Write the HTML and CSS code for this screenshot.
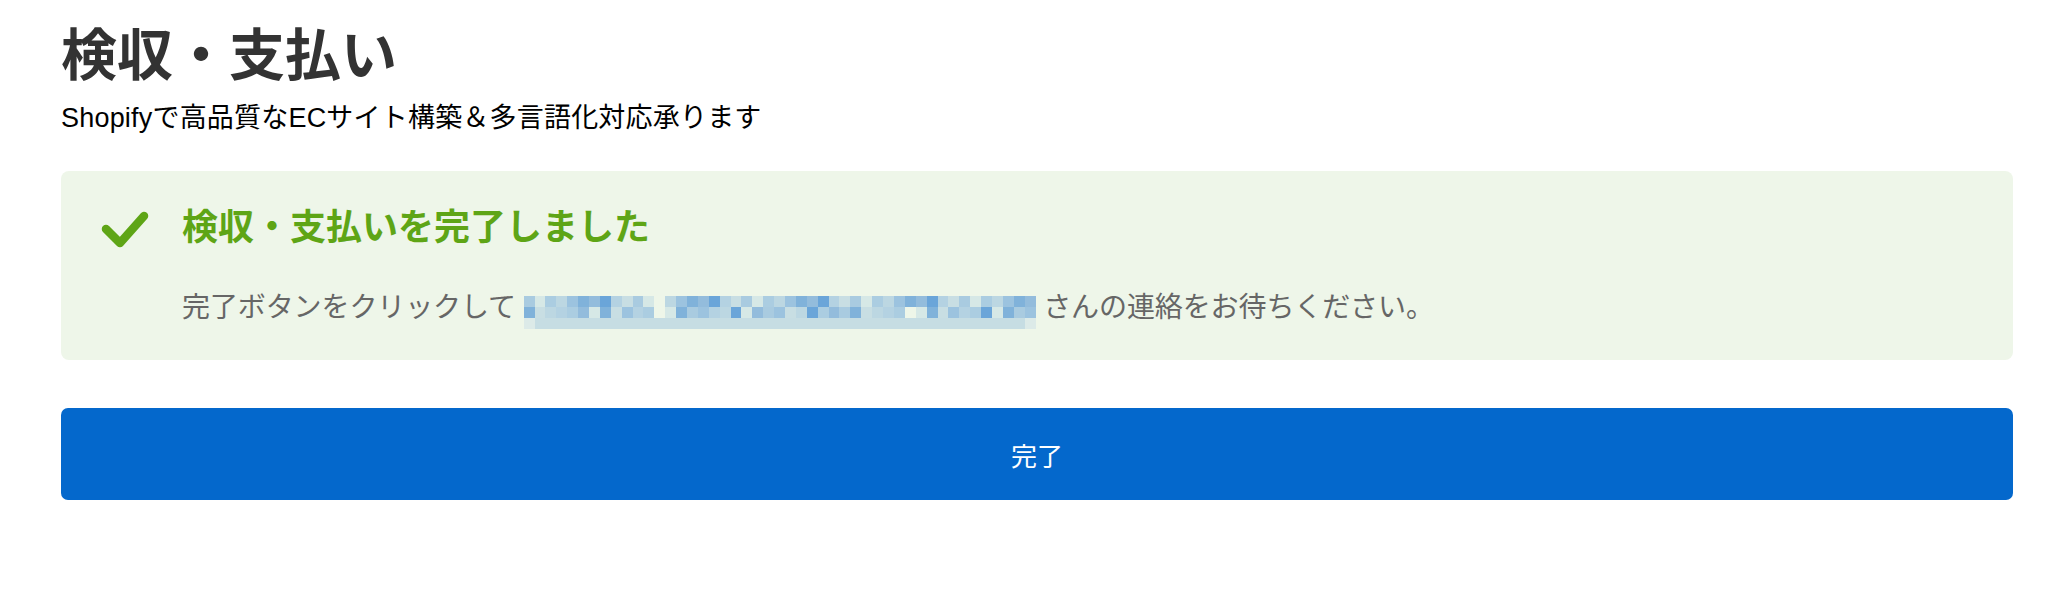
FILE: index.html
```html
<!DOCTYPE html>
<html lang="ja">
<head>
    <meta charset="UTF-8">
    <meta name="viewport" content="width=device-width, initial-scale=1.0">
    <title>検収・支払い</title>
    <link rel="stylesheet" href="styles.css">
</head>
<body>
    <main class="page">
        <h1 class="title">検収・支払い</h1>
        <p class="subtitle">Shopifyで高品質なECサイト構築＆多言語化対応承ります</p>

        <div class="notice">
            <svg class="notice-icon" width="48" height="38" viewBox="0 0 48 38">
                <polyline points="5,19 19,33 43,6" fill="none" stroke="#5ea516" stroke-width="8.5" stroke-linecap="round" stroke-linejoin="round"/>
            </svg>
            <div class="notice-body">
                <h2 class="notice-title">検収・支払いを完了しました</h2>
                <p class="notice-text">完了ボタンをクリックして <span class="redact" id="redact"></span> さんの連絡をお待ちください。</p>
            </div>
        </div>

        <button type="button" class="done-btn">完了</button>
    </main>

    <script>
        // ぼかした名前部分（モザイク）
        const redact = document.getElementById('redact');
        const blues = ['#a9cbe0', '#bcd7e2', '#93bcdc', '#c8dee3', '#abcde1', '#80b2da', '#b4d2e2', '#d6e8e6', '#9cc3df', '#6aa5d9'];
        const cols = 47;

        for (let row = 0; row < 3; row++) {
            for (let col = 0; col < cols; col++) {
                const cell = document.createElement('i');
                let color;
                if (row === 2) {
                    color = (col === 0 || col === cols - 1) ? '#dceae8' : '#c6dde3';
                } else if (col === 12 || (col === 35 && row === 1)) {
                    color = '#eef6e9';
                } else {
                    color = blues[(col * 7 + row * 5 + (col % 3) * row) % blues.length];
                }
                cell.style.background = color;
                redact.appendChild(cell);
            }
        }
    </script>
</body>
</html>
```

FILE: styles.css
```css
* {
    margin: 0;
    padding: 0;
    box-sizing: border-box;
}

body {
    font-family: "Liberation Sans", "Noto Sans CJK JP", sans-serif;
    background: #fff;
    color: #000;
}

.page {
    padding: 22px 58px 0 61px;
}

.title {
    font-size: 56px;
    line-height: 67px;
    font-weight: 700;
    color: #333;
    margin-bottom: 10px;
}

.subtitle {
    font-size: 27px;
    line-height: 39px;
    letter-spacing: 0.2px;
    color: #000;
    margin-bottom: 33px;
}

.notice {
    display: flex;
    align-items: flex-start;
    gap: 33px;
    background-color: #eef6e9;
    border-radius: 8px;
    padding: 32px 40px 31px;
}

.notice-icon {
    flex: none;
    margin-top: 7px;
}

.notice-title {
    font-size: 36px;
    line-height: 50px;
    font-weight: 700;
    color: #5ea516;
    margin-bottom: 35px;
}

.notice-text {
    font-size: 28px;
    line-height: 40px;
    letter-spacing: -0.1px;
    color: #666;
}

.redact {
    display: inline-grid;
    grid-template-columns: repeat(47, 10.9px);
    grid-auto-rows: 11px;
    vertical-align: 10px;
}

.redact i {
    display: block;
}

.done-btn {
    display: flex;
    align-items: center;
    justify-content: center;
    width: 100%;
    height: 92px;
    margin-top: 48px;
    background-color: #0468cc;
    color: #fff;
    border: none;
    border-radius: 7px;
    font-family: inherit;
    font-size: 26px;
    cursor: pointer;
}
```
